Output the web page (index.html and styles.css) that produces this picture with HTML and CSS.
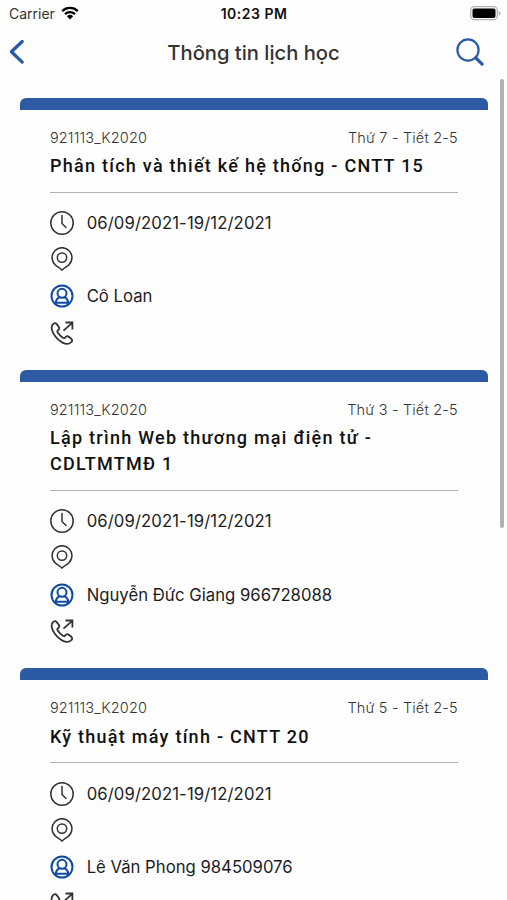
FILE: index.html
```html
<!DOCTYPE html>
<html lang="vi">
<head>
<meta charset="utf-8">
<title>Thông tin lịch học</title>
<link rel="stylesheet" href="styles.css">
</head>
<body>
<svg class="sprite" aria-hidden="true">
  <symbol id="clock" viewBox="0 0 24 24"><circle cx="12" cy="12" r="11.2"/><path d="M12 4.5v8l4 4"/></symbol>
  <symbol id="pin" viewBox="0 0 24 24"><path d="M12 23.100C10.200 20.900 7.500 19.900 5.200 17.900A9.950 9.950 0 1 1 18.800 17.900C16.500 19.900 13.800 20.900 12 23.100Z"/><circle cx="12" cy="10.600" r="4.700"/></symbol>
  <symbol id="person" viewBox="0 0 24 24"><circle cx="12" cy="12" r="10.500"/><circle cx="12" cy="9.300" r="4.500"/><path d="M5.700 19.500c.1-3.600 1.700-5.200 3.900-6.300M18.300 19.500c-.1-3.600-1.700-5.200-3.900-6.300M6 18.800h12"/></symbol>
  <symbol id="phone" viewBox="0 0 24 24"><path d="M3 3.200C1.200 5 1.200 8 3 11.700c2.100 4.300 5.500 7.700 9.500 9.900 3.700 1.900 6.900 1.500 8.900-.6 1-1 1-2.200-.1-3.200l-2.500-2c-1.100-.9-2.200-.7-3 .1l-.9.900c-.7.600-1.500.4-2.300-.2-2.100-1.500-3.600-3-4.900-5-.5-.8-.6-1.400.1-2.100l.8-.8c.8-.8.9-1.900.1-3L6.700 3.100C5.600 1.700 4.200 1.900 3 3.200ZM13.500 9.700l8.700-7.900M15.500 1.500h6.900v6.900"/></symbol>
</svg>

<header class="status">
  <div class="carrier"><span>Carrier</span>
    <svg class="wifi" viewBox="0 0 18 14"><path d="M1.200 5.100a11.200 11.200 0 0 1 15.600 0M4 8.100a7.200 7.200 0 0 1 10 0" fill="none" stroke="#000" stroke-width="2.300"/><path d="M5.900 10.300a4.500 4.500 0 0 1 6.200 0L9 13.600Z"/></svg>
  </div>
  <time class="time">10:23 PM</time>
  <svg class="battery" viewBox="0 0 31 15"><rect x=".7" y=".7" width="26.600" height="13" rx="3.800" fill="#fff" stroke="#b2b2b2" stroke-width="1.300"/><rect x="2.500" y="2.500" width="23" height="9.400" rx="2"/><path d="M28.800 5v4.600q1.600-.6 1.600-2.300T28.800 5Z" fill="#aaa"/></svg>
</header>

<nav class="nav">
  <svg class="back" viewBox="0 0 16 26"><path d="M13.200 2.500 2.400 12.800 13.200 23.100"/></svg>
  <h1 class="heading">Thông tin lịch học</h1>
  <svg class="search" viewBox="0 0 28 28"><circle cx="12" cy="12" r="10.600"/><path class="handle" d="m19.800 19.800 6.300 6.300"/></svg>
</nav>

<main class="list">
  <article class="card">
    <div class="meta"><span class="code">921113_K2020</span><span class="slot">Thứ 7 - Tiết 2-5</span></div>
    <h2 class="title">Phân tích và thiết kế hệ thống - CNTT 15</h2>
    <ul class="info">
      <li><svg class="icon"><use href="#clock"/></svg><span class="date">06/09/2021-19/12/2021</span></li>
      <li><svg class="icon pin"><use href="#pin"/></svg></li>
      <li><svg class="icon person"><use href="#person"/></svg><span>Cô Loan</span></li>
      <li><svg class="icon phone"><use href="#phone"/></svg></li>
    </ul>
  </article>
  <article class="card">
    <div class="meta"><span class="code">921113_K2020</span><span class="slot">Thứ 3 - Tiết 2-5</span></div>
    <h2 class="title">Lập trình Web thương mại điện tử -<br>CDLTMTMĐ 1</h2>
    <ul class="info">
      <li><svg class="icon"><use href="#clock"/></svg><span class="date">06/09/2021-19/12/2021</span></li>
      <li><svg class="icon pin"><use href="#pin"/></svg></li>
      <li><svg class="icon person"><use href="#person"/></svg><span>Nguyễn Đức Giang 966728088</span></li>
      <li><svg class="icon phone"><use href="#phone"/></svg></li>
    </ul>
  </article>
  <article class="card">
    <div class="meta"><span class="code">921113_K2020</span><span class="slot">Thứ 5 - Tiết 2-5</span></div>
    <h2 class="title">Kỹ thuật máy tính - CNTT 20</h2>
    <ul class="info">
      <li><svg class="icon"><use href="#clock"/></svg><span class="date">06/09/2021-19/12/2021</span></li>
      <li><svg class="icon pin"><use href="#pin"/></svg></li>
      <li><svg class="icon person"><use href="#person"/></svg><span>Lê Văn Phong 984509076</span></li>
      <li><svg class="icon phone"><use href="#phone"/></svg></li>
    </ul>
  </article>
</main>
<div class="scrollbar"></div>
</body>
</html>
```
FILE: styles.css
```css
* { box-sizing: border-box; }
body {
  margin: 0;
  height: 900px;
  overflow: hidden;
  position: relative;
  background: #fefefe;
  color: #1c1c1e;
  font-family: Inter, "Liberation Sans", sans-serif;
  white-space: nowrap;
}
svg { display: block; flex: none; }
.sprite { display: none; }

.status {
  display: grid;
  grid-template-columns: 1fr auto 1fr;
  align-items: center;
  height: 27px;
  padding: 0 6px 0 9px;
}
.carrier { display: flex; align-items: center; gap: 6px; font-size: 14px; color: #333; }
.wifi { width: 18px; height: 14px; margin-top: -1px; }
.time { font-size: 14px; font-weight: 600; color: #111; letter-spacing: .5px; margin-right: 2px; }
.battery { width: 31px; height: 15px; justify-self: end; }

.nav {
  display: grid;
  grid-template-columns: 60px 1fr 60px;
  align-items: center;
  height: 50px;
  padding: 0 23px 0 9px;
}
.back { width: 16px; height: 26px; fill: none; stroke: #2a5ba5; stroke-width: 3.3; stroke-linecap: round; stroke-linejoin: round; }
.heading { margin: 0 0 0 14px; text-align: center; font-size: 20.200px; font-weight: 500; color: #333; }
.search { width: 28px; height: 28px; justify-self: end; fill: none; stroke: #2a5ba5; stroke-width: 2.2; }
.handle { stroke-width: 3.2; stroke-linecap: round; }

.list { padding: 20.500px 19.500px 0 20.300px; }
.card {
  padding: 18px 29.700px 0;
  margin-bottom: 18.500px;
}
.card::before {
  content: "";
  display: block;
  height: 12px;
  margin: -18px -29.700px 18px;
  border-radius: 6px 6px 0 0;
  background: #2c5aa5;
}
.meta { display: flex; justify-content: space-between; height: 25.500px; line-height: 20px; font-size: 14.500px; font-weight: 300; color: #333; }
.code { letter-spacing: .12px; }
.slot { letter-spacing: .18px; }
.title {
  margin: 0;
  padding-bottom: 13px;
  border-bottom: 1.300px solid #b3b3b3;
  font: 500 18px/25.700px Roboto, sans-serif;
  letter-spacing: 1.260px;
  color: #111;
}
.info { list-style: none; margin: 0; padding: 12px 0 0; }
.info li { display: flex; align-items: center; height: 36.700px; gap: 12.700px; font-size: 16.700px; }
.date { letter-spacing: .1px; }
.icon { width: 24px; height: 24px; fill: none; stroke: #333; stroke-width: 1.500; stroke-linejoin: round; stroke-linecap: round; }
.pin { margin-top: -1px; }
.person { stroke: #1149a5; stroke-width: 2; }
.phone { stroke-width: 1.800; stroke-linejoin: miter; stroke-linecap: butt; }

.scrollbar {
  position: absolute;
  top: 79px;
  right: 3px;
  width: 4px;
  height: 449px;
  border-radius: 2px;
  background: #b2b2b2;
}
```
